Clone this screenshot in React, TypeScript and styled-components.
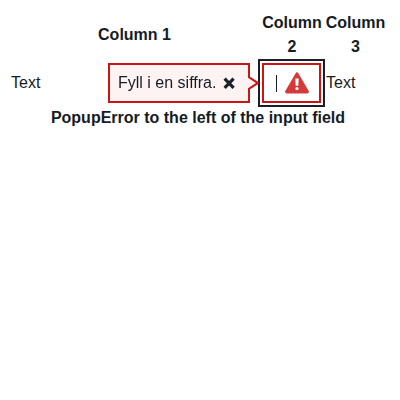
import React from "react";
import styled, { createGlobalStyle } from "styled-components";

const GlobalStyle = createGlobalStyle`
  *, *::before, *::after { box-sizing: border-box; }
  body {
    margin: 0;
    background: #fff;
    color: #161b24;
    font: 16px/24px "Liberation Sans", Arial, sans-serif;
  }
`;

const Figure = styled.div`
  width: 380px;
  margin: 10px 0 0 8px;
`;

const Grid = styled.div`
  display: grid;
  grid-template-columns: 254px 63px 61px;
  grid-template-rows: 48px 48px;
  row-gap: 1px;
`;

const HeaderCell = styled.div<{ $nudge?: number }>`
  display: flex;
  align-items: center;
  justify-content: center;
  padding-top: 2px;
  padding-right: ${({ $nudge = 0 }) => $nudge}px;
  text-align: center;
  font-weight: 700;
`;

const Cell = styled.div<{ $indent?: number }>`
  display: flex;
  align-items: center;
  padding-left: ${({ $indent = 0 }) => $indent}px;
`;

const LeadCell = styled(Cell)`
  justify-content: space-between;
  padding-right: 12px;
`;

const Popup = styled.div`
  position: relative;
  display: flex;
  align-items: center;
  width: 142px;
  height: 40px;
  padding-left: 8px;
  border: 2px solid #ca1515;
  background: #fdf3f2;
  white-space: nowrap;
  will-change: transform;
  z-index: 1;
`;

const CloseButton = styled.button`
  display: flex;
  margin: 0 0 0 6px;
  padding: 0;
  border: 0;
  background: none;
  color: #1b2129;
`;

const Arrow = styled.svg`
  position: absolute;
  left: 138px;
  top: 10px;
`;

const Field = styled.div`
  display: flex;
  align-items: center;
  width: 59px;
  height: 40px;
  padding-left: 12px;
  border: 2px solid #ca1515;
  outline: 2px solid #1b1e26;
  outline-offset: 2px;
  background: #fff;
`;

const Caret = styled.span`
  width: 1px;
  height: 17px;
  margin: 1px 8px 0 0;
  background: #161b24;
`;

const Caption = styled.div`
  margin-top: -1px;
  text-align: center;
  font-weight: 700;
`;

export default function App() {
  return (
    <>
      <GlobalStyle />
      <Figure>
        <Grid>
          <HeaderCell $nudge={1}>Column 1</HeaderCell>
          <HeaderCell $nudge={3}><span>Column<br />2</span></HeaderCell>
          <HeaderCell><span>Column<br />3</span></HeaderCell>
          <LeadCell $indent={3}>
            <span>Text</span>
            <Popup role="alert">
              <span>Fyll i en siffra.</span>
              <CloseButton aria-label="Stäng">
                <svg width="14" height="14" viewBox="0 0 14 14">
                  <path d="M2.6 2.7 11.6 11.9M11.6 2.7 2.6 11.9" stroke="currentColor" strokeWidth="3.2" />
                </svg>
              </CloseButton>
              <Arrow width="12" height="16" viewBox="0 0 12 16">
                <path d="M0 2.3 1 2.3 10.3 8 1 13.7 0 13.7Z" fill="#fdf3f2" />
                <path d="M0.3 1.8 10 8 0.3 14.2" fill="none" stroke="#ca1515" strokeWidth="2.1" />
              </Arrow>
            </Popup>
          </LeadCell>
          <Cell>
            <Field>
              <Caret />
              <svg width="24" height="22" viewBox="0 0 24 22">
                <path
                  d="M10.8 .9a1.4 1.4 0 0 1 2.4 0L23.7 19a1.6 1.6 0 0 1-1.4 2.4H1.7A1.6 1.6 0 0 1 .3 19Z"
                  fill="#d43a3a"
                />
                <path d="M10.3 6.5h3.4l-.4 7.3h-2.6Z" fill="#fff" />
                <circle cx="12" cy="16.6" r="1.6" fill="#fff" />
              </svg>
            </Field>
          </Cell>
          <Cell $indent={1}>Text</Cell>
        </Grid>
        <Caption>PopupError to the left of the input field</Caption>
      </Figure>
    </>
  );
}
